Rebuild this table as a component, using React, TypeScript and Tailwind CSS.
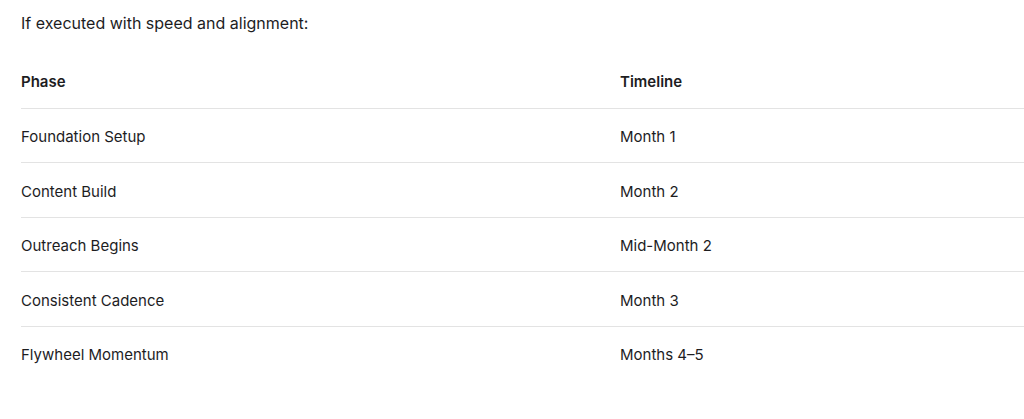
const rows = [
  ["Foundation Setup", "Month 1"],
  ["Content Build", "Month 2"],
  ["Outreach Begins", "Mid-Month 2"],
  ["Consistent Cadence", "Month 3"],
  ["Flywheel Momentum", "Months 4–5"],
]

export default function App() {
  return (
    <div className="min-h-[419px] bg-white pl-[21px] text-[#1d1d1f]" style={{ fontFamily: "Inter, 'Helvetica Neue', Arial, sans-serif" }}>
      <p className="pt-[12px] text-[16px] leading-[23px]">If executed with speed and alignment:</p>

      <table className="mt-[19px] w-full border-collapse text-left text-[15px]">
        <thead>
          <tr className="h-[54px] border-b border-[#e3e3e3]">
            <th className="w-[599px] p-0 pt-[3px] font-semibold">Phase</th>
            <th className="p-0 pt-[3px] font-semibold">Timeline</th>
          </tr>
        </thead>
        <tbody>
          {rows.map(([phase, time], i) => (
            <tr key={phase} className={i < rows.length - 1 ? "h-[54.5px] border-b border-[#e3e3e3]" : "h-[54.5px]"}>
              <td className="p-0 pt-[4px]">{phase}</td>
              <td className="p-0 pt-[4px]">{time}</td>
            </tr>
          ))}
        </tbody>
      </table>
    </div>
  )
}
